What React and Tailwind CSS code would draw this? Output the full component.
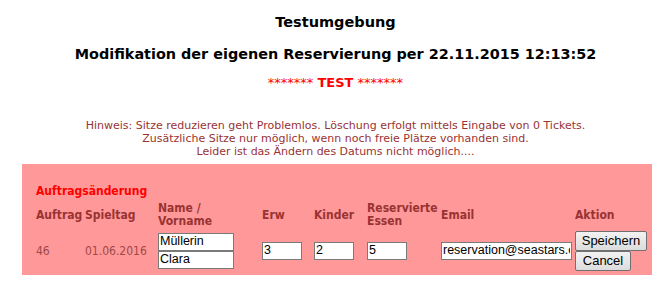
import { useState } from "react";

const cols = "grid grid-cols-[49px_73px_104px_52px_53px_74px_134px_1fr]";

const Feld = ({ value, onChange, w }) => (
  <input
    className={`${w} h-[18px] border border-[#7a7a7a] bg-white px-[1px] text-[12.5px] text-black outline-none font-['Liberation_Sans',Arial,sans-serif]`}
    value={value}
    onChange={(e) => onChange(e.target.value)}
  />
);

const Knopf = ({ children, w }) => (
  <button className={`${w} h-[20px] border border-[#707070] rounded-[2px] bg-gradient-to-b from-[#f2f2f2] to-[#dcdcdc] text-[13px] text-black font-['Liberation_Sans',Arial,sans-serif] leading-none`}>
    {children}
  </button>
);

const App = () => {
  const [form, setForm] = useState({
    name: "Müllerin",
    vorname: "Clara",
    erw: "3",
    kinder: "2",
    essen: "5",
    email: "reservation@seastars.com",
  });
  const set = (key) => (v) => setForm({ ...form, [key]: v });

  return (
    <div className="w-[671px] h-[287px] bg-white overflow-hidden font-['DejaVu_Sans',sans-serif]">
      <h1 className="pt-[13px] text-center text-[14.5px] leading-[18px] font-bold text-black">
        Testumgebung
      </h1>
      <h2 className="mt-[13px] text-center text-[14.4px] leading-[20px] font-bold text-black">
        Modifikation der eigenen Reservierung per 22.11.2015 12:13:52
      </h2>
      <p className="mt-[11px] text-center text-[13px] leading-[16px] text-[#ff0000]">
        ******* <b>TEST</b> *******
      </p>
      <div className="mt-[28px] text-center text-[11px] leading-[13px] text-[#993333]">
        <p>Hinweis: Sitze reduzieren geht Problemlos. Löschung erfolgt mittels Eingabe von 0 Tickets.</p>
        <p>Zusätzliche Sitze nur möglich, wenn noch freie Plätze vorhanden sind.</p>
        <p>Leider ist das Ändern des Datums nicht möglich....</p>
      </div>

      <div className="mt-[6px] ml-[22px] w-[630px] bg-[#ff9999] pt-[20px] pb-[3px] pl-[14px] text-[#993333] font-['DejaVu_Sans_Condensed','DejaVu_Sans',sans-serif]">
        <div className="text-[12px] leading-[14px] font-bold text-[#ff0000]">Auftragsänderung</div>
        <div className={`${cols} mt-[3px] h-[28px] items-center text-[12px] leading-[13px] font-bold`}>
          <div>Auftrag</div>
          <div>Spieltag</div>
          <div>Name /<br />Vorname</div>
          <div>Erw</div>
          <div>Kinder</div>
          <div>Reservierte<br />Essen</div>
          <div>Email</div>
          <div>Aktion</div>
        </div>
        <div className={`${cols} h-[43px] items-center text-[12px] text-[#a04848]`}>
          <div>46</div>
          <div>01.06.2016</div>
          <div className="flex flex-col">
            <Feld w="w-[76px]" value={form.name} onChange={set("name")} />
            <Feld w="w-[76px]" value={form.vorname} onChange={set("vorname")} />
          </div>
          <div>
            <Feld w="w-[40px]" value={form.erw} onChange={set("erw")} />
          </div>
          <div>
            <Feld w="w-[40px]" value={form.kinder} onChange={set("kinder")} />
          </div>
          <div>
            <Feld w="w-[40px]" value={form.essen} onChange={set("essen")} />
          </div>
          <div>
            <Feld w="w-[131px]" value={form.email} onChange={set("email")} />
          </div>
          <div className="flex flex-col items-start">
            <Knopf w="w-[72px]">Speichern</Knopf>
            <Knopf w="w-[56px]">Cancel</Knopf>
          </div>
        </div>
      </div>
    </div>
  );
};

export default App;
